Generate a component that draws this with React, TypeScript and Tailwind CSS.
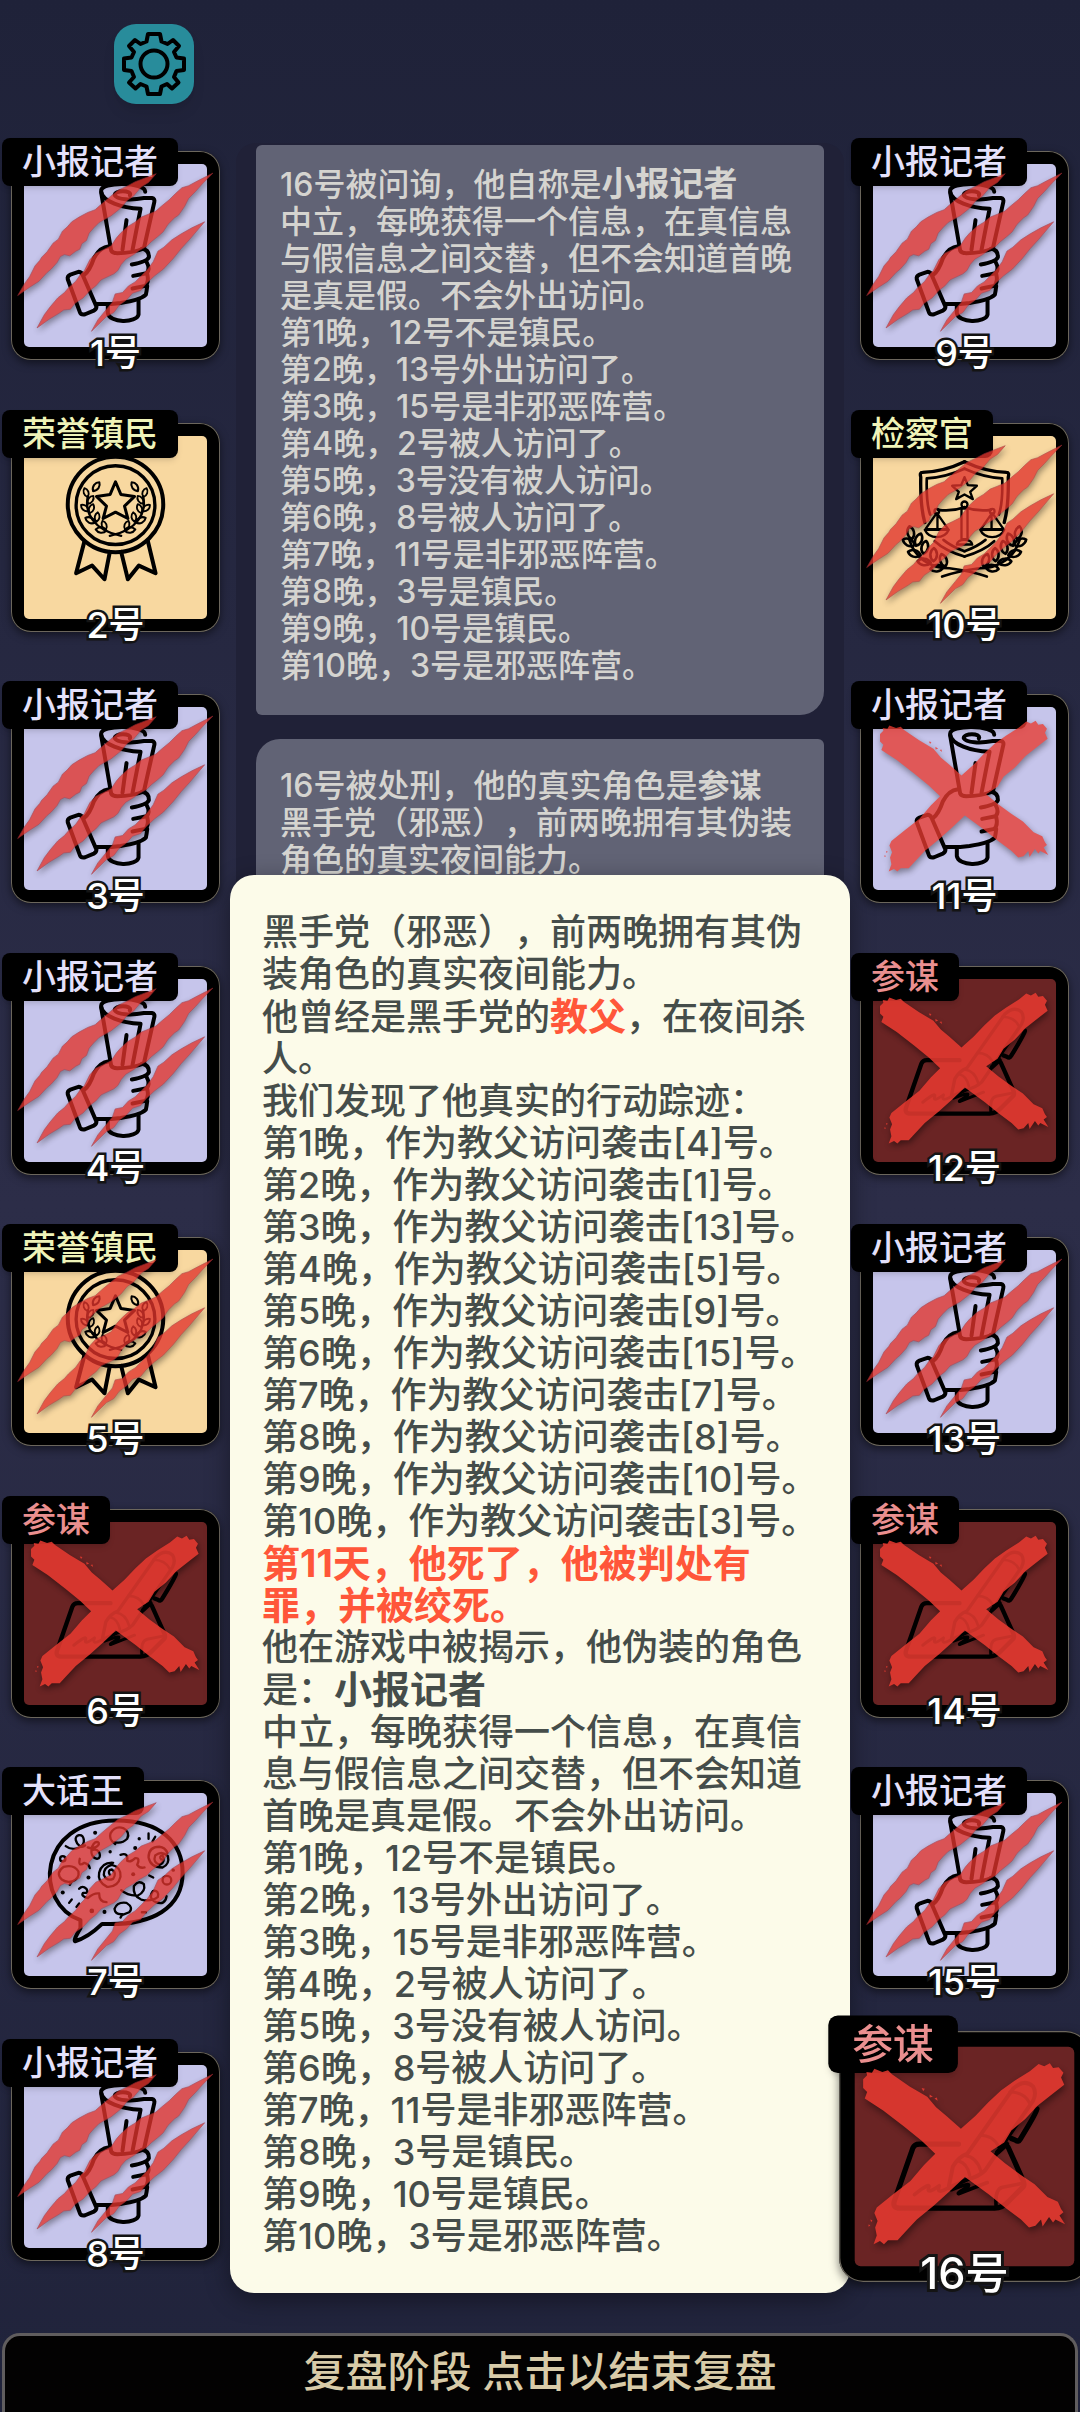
import type { ReactNode } from 'react'
import { clsx } from 'clsx'

type Role = 'reporter' | 'honored' | 'prosecutor' | 'adviser' | 'liar'
type Mark = 'claw' | 'cross' | 'none'

const roles: Record<Role, { name: string; label: string; tile: string }> = {
  reporter: { name: '小报记者', label: 'text-[#e4e1fb]', tile: 'bg-[#c6c5eb]' },
  honored: { name: '荣誉镇民', label: 'text-[#eff3b8]', tile: 'bg-[#f8d8a0]' },
  prosecutor: { name: '检察官', label: 'text-[#eff3b8]', tile: 'bg-[#f8d8a0]' },
  adviser: { name: '参谋', label: 'text-[#ea8f8f]', tile: 'bg-[#6a2424]' },
  liar: { name: '大话王', label: 'text-[#e4e1fb]', tile: 'bg-[#c6c5eb]' },
}

const leftPlayers: { id: number; role: Role; mark: Mark }[] = [
  { id: 1, role: 'reporter', mark: 'claw' },
  { id: 2, role: 'honored', mark: 'none' },
  { id: 3, role: 'reporter', mark: 'claw' },
  { id: 4, role: 'reporter', mark: 'claw' },
  { id: 5, role: 'honored', mark: 'claw' },
  { id: 6, role: 'adviser', mark: 'cross' },
  { id: 7, role: 'liar', mark: 'claw' },
  { id: 8, role: 'reporter', mark: 'claw' },
]

const rightPlayers: { id: number; role: Role; mark: Mark }[] = [
  { id: 9, role: 'reporter', mark: 'claw' },
  { id: 10, role: 'prosecutor', mark: 'claw' },
  { id: 11, role: 'reporter', mark: 'cross' },
  { id: 12, role: 'adviser', mark: 'cross' },
  { id: 13, role: 'reporter', mark: 'claw' },
  { id: 14, role: 'adviser', mark: 'cross' },
  { id: 15, role: 'reporter', mark: 'claw' },
  { id: 16, role: 'adviser', mark: 'cross' },
]

const nightInfo = [
  '第1晚，12号不是镇民。',
  '第2晚，13号外出访问了。',
  '第3晚，15号是非邪恶阵营。',
  '第4晚，2号被人访问了。',
  '第5晚，3号没有被人访问。',
  '第6晚，8号被人访问了。',
  '第7晚，11号是非邪恶阵营。',
  '第8晚，3号是镇民。',
  '第9晚，10号是镇民。',
  '第10晚，3号是邪恶阵营。',
]

const attackTargets = [4, 1, 13, 5, 9, 15, 7, 8, 10, 3]

function Leaf({ x, y, r, s = 1 }: { x: number; y: number; r: number; s?: number }) {
  return <path d="M0 0C-13 -10 -11 -28 0 -36C11 -28 13 -10 0 0Z" transform={`translate(${x} ${y}) rotate(${r}) scale(${s})`} />
}

function ReporterIcon() {
  return (
    <g strokeWidth="12">
      <path d="M434 192C434 162 300 160 302 190C304 222 366 240 420 243L396 366" />
      <path d="M388 203C396 186 340 186 343 203C350 216 392 218 430 211H454Q464 213 461 224L430 362" />
      <path d="M302 194L332 368Q336 376 350 376Q396 376 430 362" />
      <path d="M378 277L366 366" />
      <path d="M326 355Q297 358 280 392Q268 428 252 440" />
      <path d="M210 440L234 432Q242 432 246 440L288 536Q288 544 280 548L254 559Q242 562 238 552L202 454Q200 444 210 440Z" />
      <path d="M424 363Q446 366 445 388Q440 402 394 410" />
      <path d="M438 402Q450 424 438 436L398 444" />
      <path d="M440 438Q446 464 434 474L396 482" />
      <path d="M440 474Q438 492 436 500Q420 516 360 525Q320 530 288 528" />
      <path d="M322 530L322 555C326 586 408 586 414 560L414 518" />
    </g>
  )
}

function MedalIcon() {
  return (
    <g strokeWidth="12">
      <circle cx="345" cy="314" r="143" />
      <circle cx="345" cy="316" r="118" strokeWidth="10" />
      <path d="M345 246L361 284L402 290L372 319L382 356L345 337L308 356L318 319L288 290L329 284Z" strokeWidth="9" />
      <path d="M252 424L227 520L275 497L312 538L328 456" />
      <path d="M362 456L382 538L415 497L465 520L442 424" />
      <g strokeWidth="7">
        <path d="M262 290C252 340 280 392 362 408" />
        <path d="M428 290C438 340 410 392 328 408" />
        <Leaf x={278} y={274} r={35} s={0.9} />
        <Leaf x={262} y={292} r={-20} s={0.8} />
        <Leaf x={262} y={312} r={35} s={0.8} />
        <Leaf x={264} y={334} r={-50} s={0.8} />
        <Leaf x={268} y={340} r={20} s={0.8} />
        <Leaf x={284} y={368} r={-65} s={0.9} />
        <Leaf x={288} y={366} r={8} s={0.8} />
        <Leaf x={318} y={392} r={-85} s={0.9} />
        <Leaf x={316} y={390} r={-20} s={0.8} />
        <Leaf x={412} y={274} r={-35} s={0.9} />
        <Leaf x={428} y={292} r={20} s={0.8} />
        <Leaf x={428} y={312} r={-35} s={0.8} />
        <Leaf x={426} y={334} r={50} s={0.8} />
        <Leaf x={422} y={340} r={-20} s={0.8} />
        <Leaf x={406} y={368} r={65} s={0.9} />
        <Leaf x={402} y={366} r={-8} s={0.8} />
        <Leaf x={372} y={392} r={85} s={0.9} />
        <Leaf x={374} y={390} r={20} s={0.8} />
      </g>
    </g>
  )
}

function ShieldIcon() {
  const half = (
    <>
      <path d="M345 186Q282 216 219 218Q210 218 214 232Q212 318 226 368" strokeWidth="10" />
      <path d="M345 207Q290 232 232 236Q230 310 242 344" strokeWidth="8" />
      <path d="M345 470Q286 452 256 424M345 454Q306 440 282 420" strokeWidth="8" />
      <path d="M345 322Q306 336 266 330" strokeWidth="8" />
      <circle cx="262" cy="334" r="7" />
      <path d="M260 342L228 388H296L264 342V386M226 390Q236 412 262 412Q288 412 298 390Z" strokeWidth="7" />
      <path d="M180 420C194 470 240 505 300 505Q360 512 412 530" strokeWidth="8" />
      <Leaf x={188} y={418} r={-12} s={1.1} />
      <Leaf x={196} y={436} r={-65} s={1.1} />
      <Leaf x={200} y={438} r={22} s={1.1} />
      <Leaf x={214} y={466} r={-75} s={1.1} />
      <Leaf x={222} y={462} r={12} s={1.1} />
      <Leaf x={244} y={488} r={-85} s={1.1} />
      <Leaf x={252} y={484} r={2} s={1.1} />
      <Leaf x={282} y={502} r={-98} s={1.1} />
      <Leaf x={288} y={500} r={-18} s={1.1} />
    </>
  )
  return (
    <g strokeWidth="7">
      {half}
      <g transform="translate(690 0) scale(-1 1)">{half}</g>
      <path d="M345 232L355 256L382 258L362 276L370 298L345 284L320 298L328 276L308 258L335 256Z" />
      <circle cx="345" cy="314" r="9" />
      <path d="M336 326H354V418H336ZM322 434Q324 420 345 420Q366 420 368 434Z" />
    </g>
  )
}

function AdviserIcon() {
  return (
    <g strokeWidth="13">
      <path d="M330 352H232Q220 352 216 362L170 494Q164 512 184 512H420Q440 512 456 494L492 458Q496 452 490 440L454 360" />
      <path d="M424 508Q420 464 440 460L490 450" strokeWidth="9" />
      <path d="M305 462L316 408Q330 384 352 376L466 214Q494 188 516 208Q526 224 516 244L396 418Q380 434 352 440Z" strokeWidth="10" />
      <path d="M384 330Q416 330 430 358M346 380Q376 384 386 420M458 222Q494 222 508 250M330 394Q352 400 358 430" strokeWidth="8" />
      <path d="M526 264Q526 272 484 340Q480 348 472 342L462 338M450 352L428 372" strokeWidth="13" />
      <path d="M220 478Q260 446 256 460Q248 480 282 456Q274 478 300 464M312 466Q368 444 352 460Q326 474 330 476L402 448" strokeWidth="9" />
    </g>
  )
}

function LiarIcon() {
  return (
    <g strokeWidth="12">
      <path d="M240 490C100 440 110 192 345 191C482 190 546 260 546 348C546 450 460 508 305 501Q262 542 224 553Q218 550 240 514Z" />
      <g strokeWidth="7">
        <path d="M196 268C220 286 254 272 250 248C246 228 222 234 226 250C230 266 244 276 254 266" />
        <path d="M344 262Q324 248 330 230Q344 206 368 214Q390 226 380 246Q364 262 342 256" />
        <path d="M262 272C282 280 304 262 292 256C272 252 262 302 290 306C306 306 298 270 274 280" />
        <circle cx="187" cy="306" r="8" />
        <path d="M208 384L214 374Q238 366 234 344Q222 322 190 330Q164 348 184 368Q198 378 214 374" />
        <path d="M238 306Q232 332 252 318Q266 322 268 334" />
        <path d="M328 354Q320 340 334 338Q350 348 338 366Q318 374 310 354Q310 330 334 324Q362 330 360 360Q352 392 320 390Q290 376 296 348Q304 316 338 318" />
        <path d="M236 396Q246 384 258 396Q266 410 248 408Q240 418 262 424Q280 408 296 410Q296 436 318 436" />
        <path d="M360 294Q384 286 380 312Q390 318 404 304Q420 302 410 324Q418 336 432 332" />
        <path d="M482 308Q474 298 486 296Q496 314 478 324Q456 318 464 296Q484 280 502 298Q508 322 486 332Q450 332 444 302Q444 270 476 270Q494 272 500 288" />
        <path d="M362 400Q382 418 412 416Q436 404 430 382Q414 368 400 388Q396 418 422 428Q452 436 472 420Q476 400 458 402Q440 424 466 436Q494 446 498 418" />
        <path d="M360 482L366 472Q344 474 342 456Q350 434 378 438Q400 452 386 466L366 474" />
        <circle cx="499" cy="370" r="13" />
        <path d="M444 230V246M464 240L456 254M446 356L458 362M206 438L214 428M228 450L236 440M424 466H436" />
      </g>
      <g fill="currentColor" stroke="none">
        <circle cx="284" cy="228" r="6" />
        <circle cx="416" cy="246" r="5" />
        <circle cx="404" cy="274" r="6" />
        <circle cx="329" cy="285" r="5" />
        <circle cx="264" cy="362" r="6" />
        <circle cx="187" cy="407" r="6" />
        <circle cx="398" cy="352" r="6" />
        <circle cx="518" cy="340" r="5" />
        <circle cx="274" cy="462" r="7" />
        <circle cx="312" cy="465" r="6" />
      </g>
    </g>
  )
}

const icons: Record<Role, ReactNode> = {
  reporter: <ReporterIcon />,
  honored: <MedalIcon />,
  prosecutor: <ShieldIcon />,
  adviser: <AdviserIcon />,
  liar: <LiarIcon />,
}

function ClawMark() {
  return (
    <g fill="#e0342c" stroke="#a02c36" strokeWidth="2">
      <path d="M52 503L72 468L88 446L104 414L118 398L124 388L140 372L158 346L174 334L186 310L200 298L214 282L236 268L262 254L284 246L304 228L330 206L352 188L378 176L404 162L467 138L444 164L422 178L398 206L380 218L362 240L332 264L296 284L280 300L266 316L258 338L244 348L238 364L226 370L208 384L192 380L180 386L170 404L152 424L140 434L116 460L88 478Z" />
      <path d="M110 600L132 560L150 536L172 510L192 494L204 480L226 460L240 440L252 428L268 396L286 376L308 366L332 354L348 330L362 314L382 296L402 284L422 268L442 260L466 250L484 234L506 216L524 198L544 180L564 174L590 160L637 136L602 172L584 192L564 212L552 236L534 262L522 270L502 290L488 312L472 326L452 342L438 356L416 368L400 380L376 394L362 410L352 428L340 438L302 456L286 474L270 486L248 510L224 526L210 544L190 546L176 556L146 574Z" />
      <path d="M273 610L292 576L318 544L336 522L344 498L366 494L384 474L404 462L424 442L440 426L458 402L472 370L490 358L514 336L542 318L574 300L612 282L566 336L542 362L518 392L488 424L462 444L438 466L420 488L396 496L378 516L356 532L340 554L318 566Z" />
    </g>
  )
}

function CrossMark() {
  return (
    <g fill="#e83a30">
      <path d="M92 190L102 180L100 172L114 174L120 164L140 172L154 168L164 178L208 208L252 234L274 260L300 282L336 314L372 282L404 248L436 218L470 194L508 170L530 152L544 158L558 150L566 162L580 160L592 174L586 186L594 204L566 226L528 256L496 290L462 318L444 348L410 370L446 400L484 428L520 452L552 484L578 496L586 514L592 522L582 530L596 552L572 540L566 548L556 534L540 558L536 540L522 556L506 560L486 540L446 510L406 478L346 434L308 470L268 506L226 540L198 570L178 592L154 592L144 602L134 594L118 602L126 580L122 560L128 544L120 524L126 510L166 478L210 444L244 404L272 376L238 344L194 308L142 268L96 238L102 222L92 212Z" />
      <path d="M238 212l8 2l-4 6zM258 228l8 6l-8 2zM270 238l6 -2l2 8zM110 540l5 2l-3 5zM106 552l4 4l-5 2z" />
    </g>
  )
}

function PlayerCard({ id, role, mark, selected = false }: { id: number; role: Role; mark: Mark; selected?: boolean }) {
  const { name, label, tile } = roles[role]
  return (
    <button
      type="button"
      aria-pressed={selected}
      className={clsx(
        'relative size-[209px] shrink-0 rounded-[20px] bg-black p-[13px] font-medium shadow-[inset_0_0_0_1px_#6b665c,0_3px_8px_rgba(0,0,0,0.5)]',
        selected && 'z-20 scale-120',
      )}
    >
      <span className={clsx('block size-full rounded-[5px]', tile)} />
      <svg viewBox="32 70 626 626" fill="none" stroke="currentColor" strokeLinecap="round" strokeLinejoin="round" aria-hidden="true" className="absolute inset-0 size-full overflow-visible text-black">
        {icons[role]}
      </svg>
      <span className={clsx('absolute -top-[13px] -left-[9px] rounded-lg bg-black px-5 text-[34px] leading-12 whitespace-nowrap shadow-md', label)}>
        {name}
      </span>
      {mark !== 'none' && (
        <svg
          viewBox="32 70 626 626"
          aria-hidden="true"
          className={clsx(
            'absolute inset-0 size-full overflow-visible drop-shadow-[1px_3px_3px_rgba(0,0,0,0.5)]',
            role === 'adviser' ? 'opacity-86' : 'opacity-78',
          )}
        >
          {mark === 'claw' ? <ClawMark /> : <CrossMark />}
        </svg>
      )}
      <span className="absolute inset-x-0 -bottom-[13px] text-center text-[36px] leading-10 font-medium text-white [-webkit-text-stroke:5px_#141414] [paint-order:stroke_fill]">
        {`${id}号`}
      </span>
    </button>
  )
}

function SettingsIcon() {
  return (
    <svg viewBox="0 0 64 64" fill="none" stroke="black" strokeWidth="4" strokeLinejoin="round" aria-hidden="true" className="size-16">
      <path d="M26 2H38L39.500 9.500L45.500 12L51 8L57 14L52 20L54.500 25.500L62 26.500V38L54.500 39L52 45L56.500 50.500L50 56.500L45 52L39.500 54.500L38 62H26L24.500 54.500L18.500 52L13.500 56.500L7 50.500L12 45L9.500 39L2 38V26.500L9.500 25.500L12 20L7 14L13 8L18.500 12L24.500 9.500Z" />
      <circle cx="32" cy="32" r="13.500" />
    </svg>
  )
}

function GameLog() {
  return (
    <section aria-label="对话记录" className="-mt-2 min-w-0 flex-1 overflow-hidden rounded-[20px] bg-[#202137] px-5 pt-[2px] text-[32px] leading-[37px] font-medium text-[#d5d4d0]">
      <article className="mb-6 rounded-md rounded-br-[24px] bg-[#616375] px-6 pt-5 pb-[31px]">
        <p>
          16号被问询，他自称是<strong className="text-[34px]">小报记者</strong>
        </p>
        <p>中立，每晚获得一个信息，在真信息与假信息之间交替，但不会知道首晚是真是假。不会外出访问。</p>
        {nightInfo.map((line) => (
          <p key={line}>{line}</p>
        ))}
      </article>
      <article className="rounded-md rounded-tl-[24px] bg-[#616375] px-6 py-7">
        <p>
          16号被处刑，他的真实角色是<strong>参谋</strong>
        </p>
        <p>黑手党（邪恶），前两晚拥有其伪装角色的真实夜间能力。</p>
      </article>
    </section>
  )
}

function RoleDialog() {
  return (
    <div
      role="dialog"
      aria-label="16号 参谋"
      className="absolute inset-x-[230px] bottom-10 z-10 rounded-3xl bg-[#fcfbe9] px-8 py-9 text-[36px] leading-[42px] font-medium text-[#454d4a] shadow-[0_6px_24px_rgba(0,0,0,0.4)]"
    >
      <p>黑手党（邪恶），前两晚拥有其伪装角色的真实夜间能力。</p>
      <p>
        他曾经是黑手党的<strong className="text-[38px] text-[#ff5639]">教父</strong>，在夜间杀人。
      </p>
      <p>我们发现了他真实的行动踪迹：</p>
      {attackTargets.map((target, index) => (
        <p key={target}>{`第${index + 1}晚，作为教父访问袭击[${target}]号。`}</p>
      ))}
      <p className="text-[38px] font-bold text-[#ff5639]">第11天，他死了，他被判处有罪，并被绞死。</p>
      <p>
        他在游戏中被揭示，他伪装的角色是：<strong className="text-[38px]">小报记者</strong>
      </p>
      <p>中立，每晚获得一个信息，在真信息与假信息之间交替，但不会知道首晚是真是假。不会外出访问。</p>
      {nightInfo.map((line) => (
        <p key={line}>{line}</p>
      ))}
    </div>
  )
}

export default function App() {
  return (
    <div
      lang="zh-CN"
      className="flex min-h-screen flex-col overflow-hidden bg-linear-to-b from-[#1f2239] via-[#2c2d48] to-[#20233b] font-[Inter,'Noto_Sans_CJK_SC',sans-serif] [text-spacing-trim:space-all]"
    >
      <header className="px-[114px] pt-6 pb-[47px]">
        <button type="button" aria-label="设置" className="flex size-20 items-center justify-center rounded-[22px] bg-[#288c9b] shadow-lg">
          <SettingsIcon />
        </button>
      </header>

      <main className="relative flex flex-1 gap-4 px-[11px] pb-[72px]">
        <div className="flex flex-col justify-between">
          {leftPlayers.map((player) => (
            <PlayerCard key={player.id} {...player} />
          ))}
        </div>
        <GameLog />
        <div className="flex flex-col justify-between">
          {rightPlayers.map((player) => (
            <PlayerCard key={player.id} {...player} selected={player.id === 16} />
          ))}
        </div>
        <RoleDialog />
      </main>

      <footer className="px-[2px]">
        <button type="button" className="w-full rounded-t-[18px] border-[3px] border-b-0 border-[#605d5e] bg-[#030202] pt-2 pb-3 text-[42px] leading-14 font-medium text-[#d8cba8]">
          复盘阶段 点击以结束复盘
        </button>
      </footer>
    </div>
  )
}
